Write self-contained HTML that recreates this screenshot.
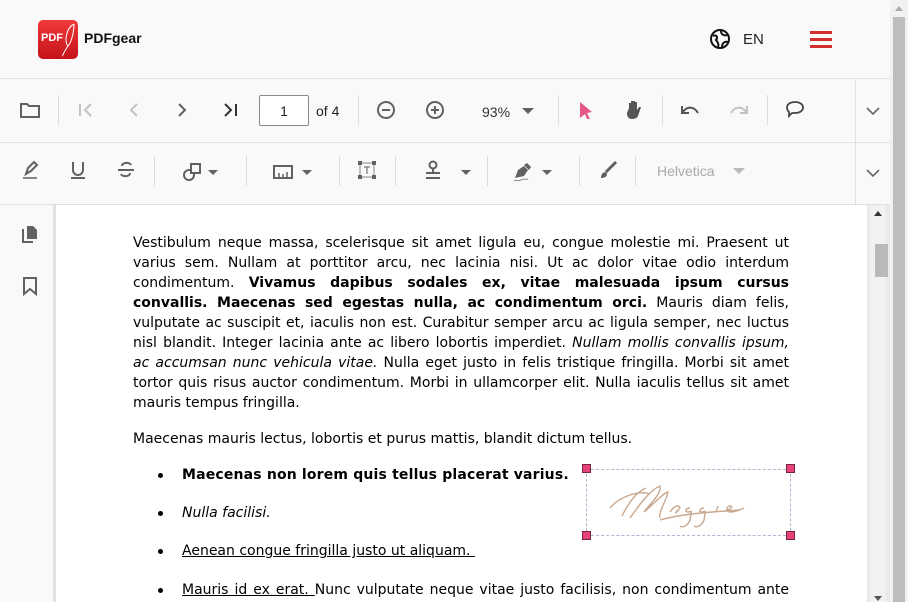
<!DOCTYPE html>
<html><head><meta charset="utf-8"><style>
*{margin:0;padding:0;box-sizing:border-box}
body{width:908px;height:602px;overflow:hidden;background:#f9f9f9;font-family:"Liberation Sans",sans-serif;position:relative}
.a{position:absolute}
.ic{position:absolute;transform:translate(-50%,-50%)}
.sep{position:absolute;width:1px;background:#dcdcdc}
.car{position:absolute;width:0;height:0;border-left:5px solid transparent;border-right:5px solid transparent;border-top:5px solid #616161}
.ln{position:absolute;left:133px;width:656px;font-family:"DejaVu Sans",sans-serif;font-size:14px;line-height:20px;color:#000;text-align:justify;text-align-last:justify;white-space:nowrap;word-spacing:0}
.ln.l{text-align:left;text-align-last:left}
.bl{position:absolute;left:182px;font-family:"DejaVu Sans",sans-serif;font-size:14px;line-height:20px;color:#000;white-space:nowrap}
.dot{position:absolute;left:158px;width:5px;height:5px;border-radius:50%;background:#000}
.h{position:absolute;width:9px;height:9px;background:#e8427a;border:1px solid #7a2340}
</style></head><body>
<!-- header -->
<div class="a" style="left:0;top:0;width:890px;height:79px;background:#f9f9f9;border-bottom:1px solid #e0e0e0"></div>
<div class="a" style="left:38px;top:20px;width:40px;height:39px;border-radius:5px;background:linear-gradient(#f03a3a,#c4121a)"></div>
<div class="a" style="left:41px;top:32px;color:#fff;font:bold 11px 'Liberation Sans',sans-serif">PDF</div>
<svg class="a" style="left:60px;top:22px" width="18" height="35"><path d="M14 2 C6 6 4 20 8 24 C12 20 14 8 14 2 M8 24 C4 30 2 34 3 34" stroke="#fff" stroke-width="1" fill="none"/></svg>
<div class="a" style="left:84px;top:30px;font:bold 14px 'Liberation Sans',sans-serif;color:#111">PDFgear</div>
<svg class="ic" style="left:720px;top:39px" width="22" height="22" viewBox="0 0 22 22"><circle cx="11" cy="11" r="9" fill="none" stroke="#111" stroke-width="2"/><path d="M4 8 C8 6 9 10 7 12 C9 14 10 17 9 19 M12 3 C12 7 16 8 18 7 M13 19 C13 15 16 13 19 14" stroke="#111" stroke-width="2" fill="none"/></svg>
<div class="a" style="left:743px;top:31px;font:15px 'Liberation Sans',sans-serif;color:#222">EN</div>
<div class="a" style="left:810px;top:31px;width:22px;height:3px;background:#d32f2f"></div>
<div class="a" style="left:810px;top:38px;width:22px;height:3px;background:#d32f2f"></div>
<div class="a" style="left:810px;top:45px;width:22px;height:3px;background:#d32f2f"></div>
<!-- toolbars -->
<div class="a" style="left:0;top:142px;width:890px;height:1px;background:#e0e0e0"></div>
<div class="a" style="left:0;top:204px;width:890px;height:1px;background:#e0e0e0"></div>
<div class="a" style="left:855px;top:80px;width:1px;height:124px;background:#e0e0e0"></div>
<!-- row1 -->
<svg class="ic" style="left:30px;top:110px" width="20" height="16"><path d="M1 2h6l2 2h10v11H1z" fill="none" stroke="#616161" stroke-width="2"/></svg>
<div class="sep" style="left:58px;top:95px;height:30px"></div>
<svg class="ic" style="left:86px;top:110px" width="16" height="16"><path d="M2 2v12M13 2L7 8l6 6" stroke="#c2c2c2" stroke-width="2" fill="none"/></svg>
<svg class="ic" style="left:134px;top:110px" width="16" height="16"><path d="M11 2L5 8l6 6" stroke="#c2c2c2" stroke-width="2" fill="none"/></svg>
<svg class="ic" style="left:182px;top:110px" width="16" height="16"><path d="M5 2l6 6-6 6" stroke="#616161" stroke-width="2" fill="none"/></svg>
<svg class="ic" style="left:231px;top:110px" width="16" height="16"><path d="M2 2l6 6-6 6M13 2v12" stroke="#333" stroke-width="2" fill="none"/></svg>
<div class="a" style="left:259px;top:95px;width:50px;height:31px;border:1px solid #8a8a8a;border-radius:2px;background:#fff;font:14px 'Liberation Sans',sans-serif;text-align:center;line-height:31px;color:#222">1</div>
<div class="a" style="left:316px;top:103px;font:14px 'Liberation Sans',sans-serif;color:#222">of 4</div>
<div class="sep" style="left:358px;top:95px;height:30px"></div>
<svg class="ic" style="left:386px;top:110px" width="20" height="20"><circle cx="10" cy="10" r="8" fill="none" stroke="#616161" stroke-width="2"/><path d="M6 10h8" stroke="#616161" stroke-width="2"/></svg>
<svg class="ic" style="left:435px;top:110px" width="20" height="20"><circle cx="10" cy="10" r="8" fill="none" stroke="#616161" stroke-width="2"/><path d="M6 10h8M10 6v8" stroke="#616161" stroke-width="2"/></svg>
<div class="a" style="left:482px;top:104px;font:14px 'Liberation Sans',sans-serif;color:#333">93%</div>
<div class="car" style="left:522px;top:108px;border-left-width:6px;border-right-width:6px;border-top-width:6px"></div>
<div class="sep" style="left:558px;top:95px;height:30px"></div>
<svg class="ic" style="left:586px;top:110px" width="14" height="18"><path d="M1 1l12 10-5 1 3 6-3 0-2-5-5 4z" fill="#e5568a"/></svg>
<svg class="ic" style="left:634px;top:109px" width="18" height="20"><path d="M4 9V4h2v6V2h2v8V2h2v8V3h2v8l2-3h2l-3 9c-1 2-3 3-6 3-4 0-5-3-5-6z" fill="#555"/></svg>
<div class="sep" style="left:662px;top:95px;height:30px"></div>
<svg class="ic" style="left:690px;top:110px" width="20" height="12"><path d="M2 2v7h7" fill="none" stroke="#555" stroke-width="2"/><path d="M3 8C7 2 14 2 18 9" fill="none" stroke="#555" stroke-width="2"/></svg>
<svg class="ic" style="left:739px;top:110px" width="20" height="12"><path d="M18 2v7h-7" fill="none" stroke="#c2c2c2" stroke-width="2"/><path d="M17 8C13 2 6 2 2 9" fill="none" stroke="#c2c2c2" stroke-width="2"/></svg>
<div class="sep" style="left:767px;top:95px;height:30px"></div>
<svg class="ic" style="left:795px;top:109px" width="20" height="18"><path d="M10 2c5 0 8 2.5 8 5.5S15 13 10 13H7l-3 3v-4C3 11 2 9 2 7.5 2 4.5 5 2 10 2z" fill="none" stroke="#444" stroke-width="1.8"/></svg>
<svg class="ic" style="left:873px;top:111px" width="14" height="10"><path d="M1 2l6 6 6-6" stroke="#666" stroke-width="1.6" fill="none"/></svg>
<!-- row2 -->
<svg class="ic" style="left:30px;top:170px" width="18" height="20"><path d="M5 14l2-6 6-6 3 3-6 6z" fill="none" stroke="#616161" stroke-width="2"/><path d="M2 18h14" stroke="#616161" stroke-width="1.5"/></svg>
<svg class="ic" style="left:78px;top:170px" width="16" height="20"><path d="M3 2v8a5 5 0 0010 0V2" fill="none" stroke="#616161" stroke-width="2"/><path d="M1 18h14" stroke="#616161" stroke-width="2"/></svg>
<svg class="ic" style="left:126px;top:170px" width="18" height="20"><path d="M14 5c-1-3-9-3-9 1M4 14c1 3 9 3 9-1" fill="none" stroke="#616161" stroke-width="2"/><path d="M1 10h16" stroke="#616161" stroke-width="2"/></svg>
<div class="sep" style="left:154px;top:156px;height:30px"></div>
<svg class="ic" style="left:192px;top:172px" width="20" height="20"><circle cx="7" cy="13" r="5" fill="none" stroke="#616161" stroke-width="2"/><rect x="9" y="2" width="9" height="9" fill="#f9f9f9" stroke="#616161" stroke-width="2"/></svg>
<div class="car" style="left:208px;top:170px"></div>
<div class="sep" style="left:246px;top:156px;height:30px"></div>
<svg class="ic" style="left:283px;top:172px" width="20" height="14"><rect x="1" y="1" width="18" height="12" fill="none" stroke="#616161" stroke-width="2"/><path d="M6 13V8M10 13V9M14 13V7" stroke="#616161" stroke-width="1.5"/></svg>
<div class="car" style="left:302px;top:170px"></div>
<div class="sep" style="left:339px;top:156px;height:30px"></div>
<svg class="ic" style="left:367px;top:170px" width="20" height="20"><rect x="3" y="3" width="14" height="14" fill="none" stroke="#888" stroke-width="1"/><rect x="1" y="1" width="4" height="4" fill="#616161"/><rect x="15" y="1" width="4" height="4" fill="#616161"/><rect x="1" y="15" width="4" height="4" fill="#616161"/><rect x="15" y="15" width="4" height="4" fill="#616161"/><path d="M7 7h6M10 7v7" stroke="#777" stroke-width="1.2"/></svg>
<div class="sep" style="left:395px;top:156px;height:30px"></div>
<svg class="ic" style="left:433px;top:170px" width="20" height="20"><circle cx="10" cy="5" r="3.5" fill="none" stroke="#616161" stroke-width="2"/><path d="M10 9v3M3 13h14M3 18h14" stroke="#616161" stroke-width="2"/></svg>
<div class="car" style="left:461px;top:170px"></div>
<div class="sep" style="left:487px;top:156px;height:30px"></div>
<svg class="ic" style="left:522px;top:172px" width="20" height="20"><path d="M3 16l3-8 6-4 4 4-4 6z" fill="#616161"/><path d="M12 3l3-2 4 4-2 3z" fill="#616161"/><path d="M2 19c3-2 4 1 7-1s4 0 7-1" stroke="#888" stroke-width="1" fill="none"/></svg>
<div class="car" style="left:542px;top:170px"></div>
<div class="sep" style="left:579px;top:156px;height:30px"></div>
<svg class="ic" style="left:608px;top:170px" width="20" height="20"><path d="M18 2L8 12" stroke="#616161" stroke-width="3"/><path d="M3 18c0-4 2-6 5-6l1 2c0 3-3 4-6 4z" fill="#616161"/></svg>
<div class="sep" style="left:635px;top:156px;height:30px"></div>
<div class="a" style="left:657px;top:163px;font:14px 'Liberation Sans',sans-serif;color:#a8a8a8">Helvetica</div>
<div class="car" style="left:733px;top:168px;border-left-width:6px;border-right-width:6px;border-top-width:6px;border-top-color:#bbb"></div>
<svg class="ic" style="left:873px;top:173px" width="14" height="10"><path d="M1 2l6 6 6-6" stroke="#666" stroke-width="1.6" fill="none"/></svg>
<!-- sidebar & viewer -->
<div class="a" style="left:0;top:205px;width:55px;height:397px;background:#f9f9f9"></div>
<div class="a" style="left:53px;top:205px;width:3px;height:397px;background:#e2e2e2"></div>
<svg class="ic" style="left:30px;top:234px" width="18" height="20"><path d="M2 5v13h10" fill="none" stroke="#616161" stroke-width="2"/><path d="M6 2h6l4 4v9H6z" fill="#616161"/></svg>
<svg class="ic" style="left:30px;top:286px" width="16" height="20"><path d="M2 2h12v16l-6-5-6 5z" fill="none" stroke="#616161" stroke-width="2"/></svg>
<div class="a" style="left:56px;top:205px;width:811px;height:397px;background:#fff"></div>
<div class="a" style="left:867px;top:205px;width:23px;height:397px;background:#e9e9e9"></div>
<div class="a" style="left:870px;top:205px;width:16px;height:397px;background:#f1f1f1"></div>
<div class="car" style="left:874px;top:211px;border-top:none;border-bottom:5px solid #333;border-left-width:4px;border-right-width:4px"></div>
<div class="a" style="left:875px;top:244px;width:13px;height:33px;background:#b9b9b9"></div>
<div class="car" style="left:874px;top:596px;border-left-width:4px;border-right-width:4px;border-top-color:#555"></div>
<!-- outer scrollbar -->
<div class="a" style="left:890px;top:0;width:18px;height:602px;background:#f1f1f1"></div>
<div class="a" style="left:893px;top:17px;width:12px;height:585px;background:#bdbdbd"></div>
<div class="car" style="left:895px;top:6px;border-top:none;border-bottom:5px solid #aaa;border-left-width:4px;border-right-width:4px"></div>
<!-- text -->
<div class="ln" style="top:233px">Vestibulum neque massa, scelerisque sit amet ligula eu, congue molestie mi. Praesent ut</div>
<div class="ln" style="top:253px">varius sem. Nullam at porttitor arcu, nec lacinia nisi. Ut ac dolor vitae odio interdum</div>
<div class="ln" style="top:273px">condimentum. <b>Vivamus dapibus sodales ex, vitae malesuada ipsum cursus</b></div>
<div class="ln" style="top:293px"><b>convallis. Maecenas sed egestas nulla, ac condimentum orci.</b> Mauris diam felis,</div>
<div class="ln" style="top:313px">vulputate ac suscipit et, iaculis non est. Curabitur semper arcu ac ligula semper, nec luctus</div>
<div class="ln" style="top:333px">nisl blandit. Integer lacinia ante ac libero lobortis imperdiet. <i>Nullam mollis convallis ipsum,</i></div>
<div class="ln" style="top:353px"><i>ac accumsan nunc vehicula vitae.</i> Nulla eget justo in felis tristique fringilla. Morbi sit amet</div>
<div class="ln" style="top:373px">tortor quis risus auctor condimentum. Morbi in ullamcorper elit. Nulla iaculis tellus sit amet</div>
<div class="ln l" style="top:393px">mauris tempus fringilla.</div>
<div class="ln l" style="top:429px">Maecenas mauris lectus, lobortis et purus mattis, blandit dictum tellus.</div>
<div class="dot" style="top:473px"></div><div class="bl" style="top:465px;letter-spacing:0.17px"><b>Maecenas non lorem quis tellus placerat varius.</b></div>
<div class="dot" style="top:511px"></div><div class="bl" style="top:503px"><i>Nulla facilisi.</i></div>
<div class="dot" style="top:549px"></div><div class="bl" style="top:541px"><u>Aenean congue fringilla justo ut aliquam.&nbsp;</u></div>
<div class="dot" style="top:588px"></div><div class="bl" style="top:580px;width:607px;text-align:justify;text-align-last:justify"><u>Mauris id ex erat.&nbsp;</u>Nunc vulputate neque vitae justo facilisis, non condimentum ante</div>
<!-- signature -->
<div class="a" style="left:586px;top:469px;width:205px;height:67px;border:1px dashed #b8b3d0"></div>
<svg class="a" style="left:600px;top:478px" width="175" height="50" viewBox="0 0 175 50"><g fill="none" stroke="#c9a890" stroke-width="1.4"><path d="M10 30c10-12 30-18 40-14M22 38c6-12 14-24 24-28M30 40c10-14 20-28 30-32 2 8-12 20-16 26 10-8 20-20 24-20-2 10-10 20-8 26"/><path d="M70 34c4-6 8-8 10-4-4 6-6 6-2 2M90 30c-4 0-6 4-2 4s4-4 2 8c-2 6-8 8-10 6M104 30c-4 0-6 4-2 4s4-4 2 8c-2 6-8 8-10 6M118 28l-2 6M120 22h0M126 32c4 0 8-4 4-4-4 0-4 6 0 6 4 0 10-2 14-4"/><path d="M60 42c20-6 50-8 80-10"/></g></svg>
<div class="h" style="left:582px;top:464px"></div>
<div class="h" style="left:786px;top:464px"></div>
<div class="h" style="left:582px;top:531px"></div>
<div class="h" style="left:786px;top:531px"></div>
</body></html>
